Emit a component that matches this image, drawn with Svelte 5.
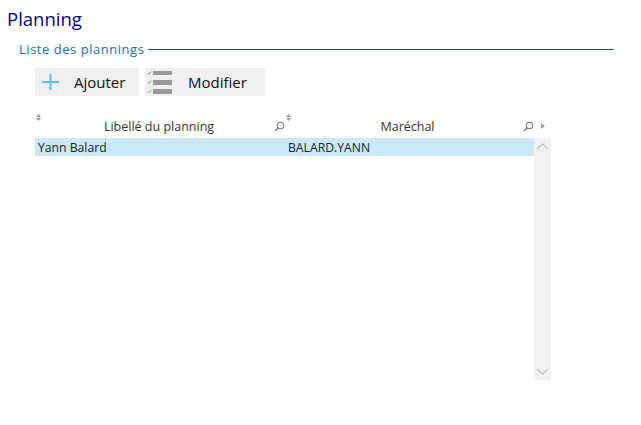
<script>
  const rows = [{ label: "Yann Balard", marshal: "BALARD.YANN" }];
</script>

<div class="page">
  <h1>Planning</h1>
  <div class="legend">
    <span>Liste des plannings</span>
    <div class="rule"></div>
  </div>

  <div class="content">
    <div class="toolbar">
      <button class="add">
        <svg width="18" height="16" viewBox="0 0 18 16">
          <path d="M0 8h17M8.500 0v16" stroke="#4fc3f0" stroke-width="2" fill="none" />
        </svg>
        Ajouter
      </button>
      <button class="edit">
        <svg width="28" height="28" viewBox="0 0 28 28">
          <path d="M3 5l1.200 1.200 2-2.600M3 14l1.200 1.200 2-2.600M3 23.500l1.200 1.200 2-2.600" stroke="#6cb33f" stroke-width="1" fill="none" />
          <path d="M8 3h19v4H8zM8 12h19v5H8zM8 21h19v5H8z" fill="#9a9a9a" />
        </svg>
        Modifier
      </button>
    </div>

    <div class="table">
      <div class="head">
        <div class="col first">
          <svg class="sort" width="5" height="7" viewBox="0 0 5 7">
            <path d="M2.500 0L5 3H0zM2.500 7L0 4h5z" fill="#999" />
          </svg>
          <span class="name">Libellé du planning</span>
          <svg class="search" width="11" height="11" viewBox="0 0 11 11">
            <circle cx="6.500" cy="4.500" r="3.300" fill="none" stroke="#777" stroke-width="1.100" />
            <path d="M4 7L1 10" stroke="#777" stroke-width="1.500" />
          </svg>
        </div>
        <div class="col second">
          <svg class="sort" width="5" height="7" viewBox="0 0 5 7">
            <path d="M2.500 0L5 3H0zM2.500 7L0 4h5z" fill="#999" />
          </svg>
          <span class="name">Maréchal</span>
          <svg class="search" width="11" height="11" viewBox="0 0 11 11">
            <circle cx="6.500" cy="4.500" r="3.300" fill="none" stroke="#777" stroke-width="1.100" />
            <path d="M4 7L1 10" stroke="#777" stroke-width="1.500" />
          </svg>
        </div>
        <svg class="more" width="4" height="6" viewBox="0 0 4 6">
          <path d="M0 0l4 3-4 3z" fill="#999" />
        </svg>
      </div>

      <div class="body">
        <div class="rows">
          {#each rows as row}
            <div class="row">
              <div class="cell first-cell">{row.label}</div>
              <div class="cell">{row.marshal}</div>
            </div>
          {/each}
        </div>
        <div class="scrollbar">
          <svg width="13" height="7" viewBox="0 0 13 7">
            <path d="M1 6l5.500-5 5.500 5" stroke="#c4c4c4" stroke-width="1.300" fill="none" />
          </svg>
          <svg width="13" height="7" viewBox="0 0 13 7">
            <path d="M1 1l5.500 5 5.500-5" stroke="#c4c4c4" stroke-width="1.300" fill="none" />
          </svg>
        </div>
      </div>
    </div>
  </div>
</div>

<style>
  :global(body) {
    background: #fff;
  }

  .page {
    width: 641px;
    height: 425px;
    box-sizing: border-box;
    padding: 7px 27px 0 7px;
    font-family: "Open Sans", "Noto Sans", sans-serif;
    color: #222;
  }

  h1 {
    margin: 0;
    height: 24px;
    font-size: 18.500px;
    font-weight: 400;
    line-height: 24px;
    color: #00008b;
  }

  .legend {
    display: flex;
    align-items: center;
    gap: 4px;
    margin: 9px 0 0 12px;
    height: 18px;
    font-size: 13px;
    letter-spacing: 0.530px;
    color: #1f6aa5;
  }

  .rule {
    flex: 1;
    height: 1px;
    background: #14577f;
  }

  .content {
    padding-left: 28px;
  }

  .toolbar {
    display: flex;
    gap: 6px;
    margin-top: 10px;
    height: 28px;
  }

  button {
    display: flex;
    align-items: center;
    border: 0;
    padding: 0;
    background: #f0f0f0;
    font: inherit;
    font-size: 15px;
    color: #111;
  }

  .add {
    width: 104px;
    padding-left: 7px;
    gap: 14px;
  }

  .edit {
    width: 120px;
    gap: 15px;
  }

  .table {
    width: 516px;
    margin-top: 14px;
    font-size: 12.500px;
  }

  .head {
    display: flex;
    height: 28px;
    position: relative;
  }

  .col {
    position: relative;
    text-align: center;
  }

  .first {
    width: 250px;
  }

  .second {
    width: 249px;
  }

  .name {
    position: absolute;
    left: -1px;
    right: 1px;
    bottom: 3px;
    color: #333;
  }

  .second .name {
    left: -2px;
    right: 2px;
  }

  .sort {
    position: absolute;
    left: 1px;
    top: 4px;
  }

  .search {
    position: absolute;
    right: 0;
    bottom: 6px;
  }

  .more {
    position: absolute;
    left: 506px;
    top: 13px;
  }

  .body {
    display: flex;
    height: 242px;
  }

  .rows {
    width: 499px;
  }

  .row {
    display: flex;
    height: 18px;
    line-height: 19px;
    background: #cbe8f6;
    font-size: 12.200px;
  }

  .cell {
    flex: 1;
    padding-left: 3px;
  }

  .first-cell {
    flex: 0 0 250px;
    box-sizing: border-box;
  }

  .scrollbar {
    width: 17px;
    display: flex;
    flex-direction: column;
    justify-content: space-between;
    align-items: center;
    padding: 5px 0;
    box-sizing: border-box;
    background: #f1f1f1;
  }
</style>
